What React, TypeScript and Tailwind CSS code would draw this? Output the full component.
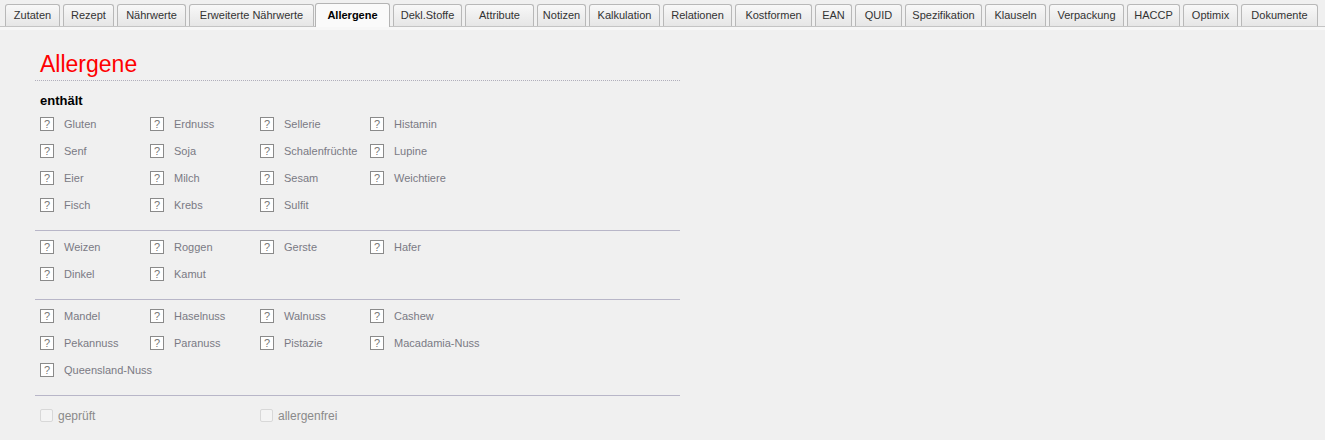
import React from "react";

const tabs = [
  { label: "Zutaten", w: "w-[55px]" },
  { label: "Rezept", w: "w-[51px]" },
  { label: "Nährwerte", w: "w-[69px]" },
  { label: "Erweiterte Nährwerte", w: "w-[125px]" },
  { label: "Allergene", w: "w-[75px] -ml-[2px]", active: true },
  { label: "Dekl.Stoffe", w: "w-[69px]" },
  { label: "Attribute", w: "w-[69px]" },
  { label: "Notizen", w: "w-[49px]" },
  { label: "Kalkulation", w: "w-[71px]" },
  { label: "Relationen", w: "w-[69px]" },
  { label: "Kostformen", w: "w-[77px]" },
  { label: "EAN", w: "w-[37px]" },
  { label: "QUID", w: "w-[47px]" },
  { label: "Spezifikation", w: "w-[77px]" },
  { label: "Klauseln", w: "w-[61px]" },
  { label: "Verpackung", w: "w-[75px]" },
  { label: "HACCP", w: "w-[53px]" },
  { label: "Optimix", w: "w-[55px]" },
  { label: "Dokumente", w: "w-[77px]" },
];

const groups = [
  ["Gluten", "Erdnuss", "Sellerie", "Histamin", "Senf", "Soja", "Schalenfrüchte", "Lupine", "Eier", "Milch", "Sesam", "Weichtiere", "Fisch", "Krebs", "Sulfit"],
  ["Weizen", "Roggen", "Gerste", "Hafer", "Dinkel", "Kamut"],
  ["Mandel", "Haselnuss", "Walnuss", "Cashew", "Pekannuss", "Paranuss", "Pistazie", "Macadamia-Nuss", "Queensland-Nuss"],
];

function Allergen({ name }: { name: string }) {
  return (
    <div className="flex h-[27px] items-center">
      <span className="flex h-[14px] w-[14px] shrink-0 items-center justify-center border border-[#8a8a8a] bg-white text-[11px] leading-none text-[#777]">
        ?
      </span>
      <span className="ml-[10px] text-[11px] text-[#7a7a84] whitespace-nowrap">{name}</span>
    </div>
  );
}

export default function App() {
  return (
    <div className="h-[440px] w-[1325px] bg-[#f0f0f0] font-['Liberation_Sans',sans-serif]">
      <div className="flex items-end gap-[3px] border-b border-[#c4c4c4] pl-[5px] pt-[3px]">
        {tabs.map((t) => (
          <div
            key={t.label}
            className={
              t.active
                ? `${t.w} -mb-px flex h-[24px] shrink-0 items-center justify-center rounded-t-[3px] border border-b-0 border-[#b4b4b4] bg-[#fafafa] text-[11px] font-bold text-black`
                : `${t.w} flex h-[22px] shrink-0 items-center justify-center rounded-t-[3px] border border-b-0 border-[#b8b8b8] bg-gradient-to-b from-[#f8f8f8] to-[#e6e6e6] text-[11px] text-[#333]`
            }
          >
            {t.label}
          </div>
        ))}
      </div>
      <div className="h-[3px] bg-[#f7f7f7]" />

      <div className="ml-[35px] w-[645px] pt-[19px]">
        <h1 className="pl-[5px] text-[23px] leading-[30px] text-[#ff0000]">Allergene</h1>
        <div className="mt-[1px] border-b border-dotted border-[#b0aebb]" />
        <div className="pl-[5px] pt-[10px] text-[13px] font-bold text-black">enthält</div>
        <div>
          {groups.map((g, i) => (
            <div key={i} className={i > 0 ? "border-t border-[#b8b6c8] pt-[3px] pb-[11px]" : "pb-[11px]"}>
              <div className="grid grid-cols-[110px_110px_110px_110px] pl-[5px]">
                {g.map((n) => (
                  <Allergen key={n} name={n} />
                ))}
              </div>
            </div>
          ))}
          <div className="flex border-t border-[#b8b6c8] pl-[5px] pt-[11px]">
            <label className="flex w-[220px] items-center">
              <span className="h-[13px] w-[13px] rounded-[2px] border border-[#d8d8d8] bg-[#f4f4f4]" />
              <span className="ml-[5px] text-[12px] text-[#8a8a8a]">geprüft</span>
            </label>
            <label className="flex items-center">
              <span className="h-[13px] w-[13px] rounded-[2px] border border-[#d8d8d8] bg-[#f4f4f4]" />
              <span className="ml-[5px] text-[12px] text-[#8a8a8a]">allergenfrei</span>
            </label>
          </div>
        </div>
      </div>
    </div>
  );
}
